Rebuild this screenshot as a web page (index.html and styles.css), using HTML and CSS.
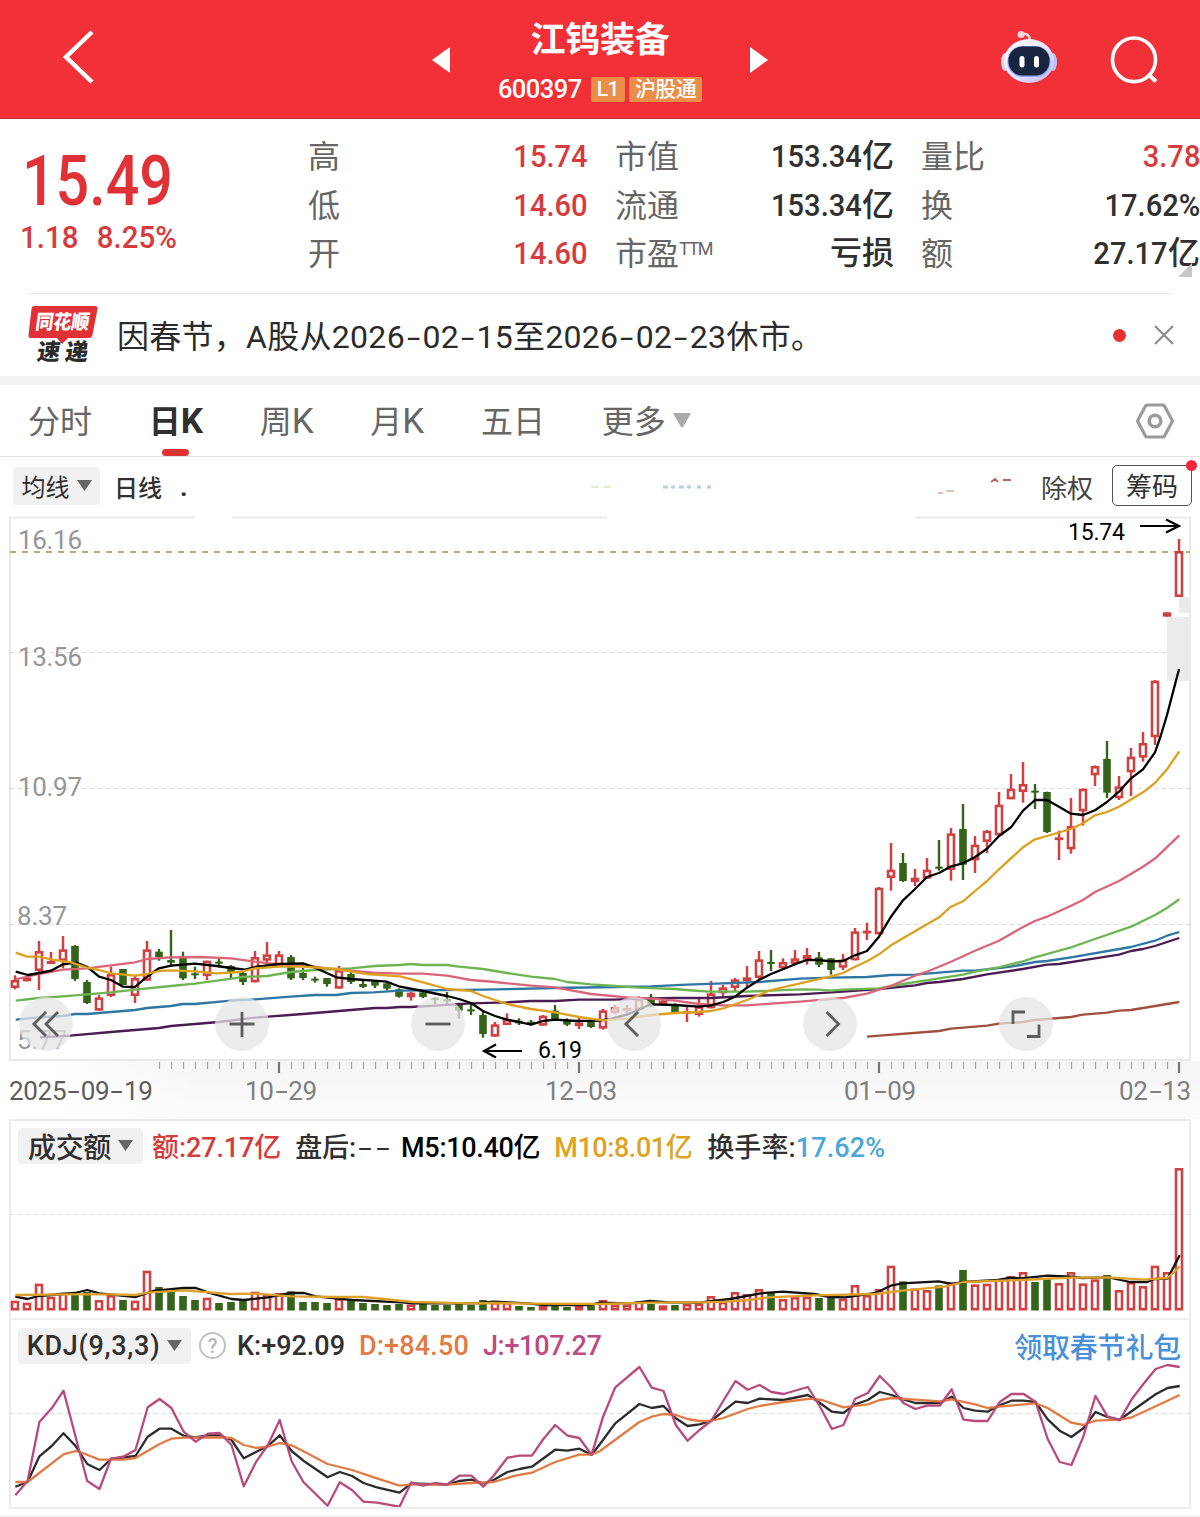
FILE: index.html
```html
<!DOCTYPE html>
<html lang="zh-CN">
<head>
<meta charset="utf-8">
<title>江钨装备 600397</title>
<link rel="stylesheet" href="styles.css">
</head>
<body>
<header class="topbar">
  <svg class="back" width="36" height="56" viewBox="0 0 36 56"><path d="M31 3 5 28l26 25" fill="none" stroke="#fff" stroke-width="4.5"/></svg>
  <svg class="prev" width="18" height="26" viewBox="0 0 18 26"><path d="M18 0v26L0 13z" fill="#fff"/></svg>
  <div class="title">
    <h1>江钨装备</h1>
    <div class="code"><span>600397</span><b class="tag tag-l1">L1</b><b class="tag">沪股通</b></div>
  </div>
  <svg class="next" width="18" height="26" viewBox="0 0 18 26"><path d="M0 0v26l18-13z" fill="#fff"/></svg>
  <svg class="robot" width="58" height="54" viewBox="0 0 58 54">
    <defs><linearGradient id="shell" x1="0" y1="0" x2="1" y2="1"><stop offset="0" stop-color="#fff"/><stop offset=".55" stop-color="#e9e4fb"/><stop offset="1" stop-color="#b9b3f2"/></linearGradient></defs>
    <path d="M22 4q8-1 8 7" fill="none" stroke="#ffd9dd" stroke-width="2.6"/><circle cx="21" cy="4.500" r="3.500" fill="#ffd5d9"/>
    <ellipse cx="5" cy="32" rx="4" ry="9" fill="#d9d4f7"/><ellipse cx="53" cy="32" rx="4" ry="9" fill="#b9c4fa"/>
    <ellipse cx="29" cy="31" rx="25" ry="22" fill="url(#shell)"/>
    <rect x="7.500" y="16" width="43" height="31" rx="15" fill="#8ba0f0"/>
    <rect x="8.500" y="16.500" width="41" height="29" rx="14" fill="#17233f"/>
    <rect x="19.500" y="26" width="5" height="11.500" rx="2.500" fill="#fff"/><rect x="34" y="26" width="5" height="11.500" rx="2.500" fill="#fff"/>
  </svg>
  <svg class="search" width="50" height="50" viewBox="0 0 50 50"><ellipse cx="24" cy="23.800" rx="21.500" ry="21.800" fill="none" stroke="#fff" stroke-width="3.600"/><path d="m38 38 8 7.500" stroke="#fff" stroke-width="4" fill="none"/></svg>
</header>

<section class="quote">
  <div class="price"><strong>15.49</strong><p><span>1.18</span><span>8.25%</span></p></div>
  <dl class="col"><dt>高</dt><dd class="up"><b>15.74</b></dd><dt>低</dt><dd class="up"><b>14.60</b></dd><dt>开</dt><dd class="up"><b>14.60</b></dd></dl>
  <dl class="col"><dt>市值</dt><dd><b>153.34</b>亿</dd><dt>流通</dt><dd><b>153.34</b>亿</dd><dt>市盈<sup>TTM</sup></dt><dd>亏损</dd></dl>
  <dl class="col"><dt>量比</dt><dd class="up"><b>3.78</b></dd><dt>换</dt><dd><b>17.62%</b></dd><dt>额</dt><dd><b>27.17</b>亿</dd></dl>
  <i class="corner"></i>
</section>

<section class="news">
  <svg class="logo" width="70" height="60" viewBox="0 0 70 60">
    <path d="M6 1h61q3 0 2.500 3l-5 26q-.5 3-3.500 3H40l-6 6-5-6H3q-3 0-2.500-3L3.500 4Q4 1 6 1z" fill="#e03236"/>
    <g font-family="Noto Sans CJK SC" font-weight="900" transform="skewX(-8)"><text x="10" y="24" font-size="20" fill="#fff" textLength="54" lengthAdjust="spacingAndGlyphs">同花顺</text><text x="16" y="55" font-size="23" fill="#2b2b2b" textLength="51">速递</text></g>
  </svg>
  <p class="headline">因春节，A股从2026<i>-</i>02<i>-</i>15至2026<i>-</i>02<i>-</i>23休市。</p>
  <i class="dot"></i>
  <svg class="close" width="20" height="20" viewBox="0 0 20 20"><path d="m1 1 18 18M19 1 1 19" stroke="#8c8c8c" stroke-width="2.200"/></svg>
</section>

<nav class="tabs">
  <a>分时</a><a class="active">日<em>K</em></a><a>周<em>K</em></a><a>月<em>K</em></a><a>五日</a><a>更多</a>
  <svg class="more" width="18" height="15" viewBox="0 0 18 15"><path d="M1 0h16q1 0 .6 1L10 14q-1 1-2 0L.4 1Q0 0 1 0z" fill="#aaa"/></svg>
  <svg class="gear" width="38" height="36" viewBox="0 0 38 36"><path d="M11 2h16q1 0 1.500 1L36 17q.5 1 0 2l-7.500 14q-.5 1-1.500 1H11q-1 0-1.500-1L2 19q-.5-1 0-2L9.500 3q.5-1 1.500-1z" fill="none" stroke="#9a9a9a" stroke-width="3.200"/><circle cx="19" cy="18" r="5.800" fill="none" stroke="#9a9a9a" stroke-width="3.600"/></svg>
</nav>

<div class="toolbar">
  <span class="chip chip-ma">均线<svg width="15" height="11" viewBox="0 0 15 11"><path d="M0 0h15L7.500 11z" fill="#666"/></svg></span>
  <b class="period">日线</b><span class="point">.</span>
  <svg class="marks" width="440" height="20" viewBox="0 0 440 20"><path d="M2 10h8m5 0h7" stroke="#cdebc4" stroke-width="1.500"/><path d="M74 10h5m3 0h4m4 0h5m3 0h4m6 0h4m6 0h4" stroke="#b5cfe2" stroke-width="3"/><path d="M349 16h5m3-2h8" stroke="#d8a9a0" stroke-width="1.500"/><path d="m402 5 4-3 3 3m5-2h8" stroke="#b96457" stroke-width="1.800" fill="none"/></svg>
  <span class="rights">除权</span><span class="chips">筹码<i></i></span>
</div>

<main>
  <section class="kline">
    <svg id="kline" width="1200" height="545" viewBox="0 516 1200 545"></svg>
    <div class="controls">
      <button><svg viewBox="0 0 54 54"><path d="M27 15 15 27l12 12M39 15 27 27l12 12"/></svg></button>
      <button><svg viewBox="0 0 54 54"><path d="M27 15v25M14.500 27h25"/></svg></button>
      <button><svg viewBox="0 0 54 54"><path d="M14.500 27h25"/></svg></button>
      <button><svg viewBox="0 0 54 54"><path d="M31 15 19 27l12 12"/></svg></button>
      <button><svg viewBox="0 0 54 54"><path d="m23.500 15 12 12-12 12"/></svg></button>
      <button><svg viewBox="0 0 54 54"><path d="M14 27V15h12M28 39.500h12v-12"/></svg></button>
    </div>
  </section>
  <div class="axis">
    <svg id="ticks" width="1200" height="14" viewBox="0 1060 1200 14"></svg>
    <div class="dates"><span class="first">2025<i>-</i>09<i>-</i>19</span><span>10<i>-</i>29</span><span>12<i>-</i>03</span><span>01<i>-</i>09</span><span>02<i>-</i>13</span></div>
  </div>
  <section class="panel volume">
    <div class="legend">
      <span class="chip">成交额<svg width="15" height="11" viewBox="0 0 15 11"><path d="M0 0h15L7.500 11z" fill="#666"/></svg></span>
      <span class="red">额:27.17亿</span><span class="dark after">盘后:<i>-</i><i>-</i></span><span class="black">M5:10.40亿</span><span class="gold">M10:8.01亿</span><span class="dark turn">换手率:<em>17.62%</em></span>
    </div>
    <svg id="volume" width="1200" height="155" viewBox="0 1163 1200 155"></svg>
  </section>
  <section class="panel kdj">
    <div class="legend">
      <span class="chip"><span>KDJ(9,3,3)</span><svg width="15" height="11" viewBox="0 0 15 11"><path d="M0 0h15L7.500 11z" fill="#666"/></svg></span>
      <span class="help">?</span><span class="dark">K:+92.09</span><span class="orange">D:+84.50</span><span class="plum">J:+107.27</span><a class="gift">领取春节礼包</a>
    </div>
    <svg id="kdj" width="1200" height="145" viewBox="0 1362 1200 145"></svg>
  </section>
</main>
<footer></footer>
<script src="chart.js"></script>
</body>
</html>
```
FILE: styles.css
```css
* { box-sizing: border-box; }
body { margin: 0; width: 1200px; height: 1517px; overflow: hidden; background: #fff; color: #303030; font-family: Roboto, "Noto Sans CJK SC", sans-serif; }
i, em { font-style: normal; }
h1, p, dl, dd { margin: 0; }
svg { display: block; flex: none; }

.topbar { display: flex; align-items: flex-start; height: 119px; background: #f23038; border-bottom: 1px solid #b9353b; color: #fff; }
.back { margin: 29px 0 0 61px; }
.prev { margin: 47px 0 0 335px; }
.title { width: 300px; text-align: center; }
.title h1 { margin-top: 16px; font-size: 35px; font-weight: 700; line-height: 50px; letter-spacing: -.2px; }
.code { display: flex; justify-content: center; align-items: center; margin-top: 10px; height: 26px; font-size: 25.500px; font-weight: 500; letter-spacing: -.5px; }
.code > span { margin-right: 9px; }
.tag { display: inline-block; height: 25px; line-height: 25px; margin-right: 4px; padding: 0 6px; background: #e98d48; border-radius: 2px; font-size: 21px; font-weight: 500; letter-spacing: -.6px; }
.tag:last-child { margin-right: 0; }
.next { margin: 47px 0 0 0; }
.robot { margin: 30px 0 0 232px; }
.search { margin: 36px 0 0 52px; }

.quote { position: relative; display: flex; height: 174px; padding-top: 13px; }
.price { width: 308px; padding-left: 20px; color: #e03236; }
.price strong { display: block; margin: 13px 0 0 2px; font-size: 70px; font-weight: 500; line-height: 72px; transform: scaleX(.845); transform-origin: left; }
.price p { display: flex; gap: 20px; margin-top: 0; font-size: 32px; line-height: 40px; font-weight: 500; transform: scaleX(.92); transform-origin: left; color: #d63c3e; }
.col { display: grid; grid-template-columns: auto 1fr; grid-auto-rows: 48.500px; width: 280px; margin-right: 27px; line-height: 48px; font-size: 32px; }
.col:nth-of-type(2) { width: 279px; }
.col:nth-of-type(3) { width: 279px; margin-right: 0; }
.col dt { color: #666; white-space: nowrap; line-height: 50px; }
.col dd { text-align: right; font-weight: 500; }
.col b { display: inline-block; font-weight: 500; transform: scaleX(.91); transform-origin: right; }
.col .up { color: #d63c3e; }
.col sup { font-size: 18px; line-height: 0; vertical-align: 10px; letter-spacing: -1.500px; }
.corner { position: absolute; right: 8px; bottom: 16px; border-left: 14px solid transparent; border-bottom: 14px solid #c8c8c8; }

.news { display: flex; align-items: center; height: 83px; margin: 0 28px; border-top: 1px solid #e8e8e8; }
.logo { margin-left: 0; }
.headline { flex: 1; margin: 3px 0 0 19px; font-size: 32px; line-height: 48px; white-space: nowrap; color: #2b2b2b; letter-spacing: .28px; }
.headline i { display: inline-block; width: 17.500px; text-align: center; transform: scaleX(1.5); }
.dot { width: 13px; height: 13px; border-radius: 50%; background: #e5302f; margin-right: 28px; }
.close { margin-right: -2px; }

.tabs { display: flex; align-items: center; height: 81px; padding-left: 28px; border-top: 9px solid #f3f3f3; border-bottom: 1px solid #e2e2e2; font-size: 32px; color: #666; }
.tabs a { margin-right: 56.700px; line-height: 70px; padding-top: 3px; white-space: nowrap; }
.tabs em { font-size: 35px; line-height: 0; }
.tabs .active { position: relative; color: #303030; font-weight: 700; }
.tabs .active::after { content: ""; position: absolute; left: 13px; bottom: 1px; width: 27px; height: 7px; border-radius: 4px; background: #e03236; }
.tabs a:nth-child(6) { margin-right: 7px; }
.gear { margin-left: auto; margin-right: 26px; }

.toolbar { display: flex; align-items: center; height: 59px; padding-left: 13px; font-size: 26px; }
.chip { display: flex; align-items: center; justify-content: center; gap: 7px; background: #f1f1f1; border-radius: 4px; color: #303030; font-weight: 500; }
.chip-ma { width: 87px; height: 38px; margin-top: -2px; font-size: 24px; font-weight: 400; }
.period { margin-left: 14px; font-weight: 500; font-size: 24px; }
.point { margin-left: 18px; font-weight: 700; width: 10px; }
.marks { margin-left: 399px; }
.rights { margin-left: 12px; color: #444; white-space: nowrap; }
.chips { position: relative; margin: -2px 0 0 19px; width: 80px; height: 41px; border: 1.500px solid #555; border-radius: 5px; text-align: center; line-height: 43px; }
.chips i { position: absolute; right: -6px; top: -6px; width: 11px; height: 11px; border-radius: 50%; background: #f5273a; }

.kline { position: relative; height: 545px; }
.controls { position: absolute; left: 19px; top: 481px; display: flex; gap: 142px; }
.controls button { width: 54px; height: 54px; padding: 0; border: 0; border-radius: 50%; background: rgba(229, 229, 229, .74); }
.controls path { fill: none; stroke: #5c5c5c; stroke-width: 2.800; }
.axis { height: 58px; background: linear-gradient(90deg, #fff 50px, rgba(255, 255, 255, 0) 200px), linear-gradient(#f5f5f5, #fbfbfb 80%); }
.dates { display: grid; grid-template-columns: 236px 300px 299px 275px auto; padding-left: 9px; font-size: 26px; line-height: 32px; color: #808080; letter-spacing: -.3px; white-space: nowrap; }
.dates i { display: inline-block; width: 14.500px; text-align: center; transform: scaleX(1.700); }
.dates .first { color: #5c5c5c; }

.panel { position: relative; width: 1182px; margin-left: 9px; border: 2px solid #ececec; }
.panel > svg { margin-left: -11px; }
.volume { height: 201px; }
.kdj { height: 189px; border-top: 0; }
.legend { display: flex; align-items: center; height: 42px; padding: 7px 8px 0 7px; font-size: 27px; font-weight: 500; letter-spacing: -.1px; white-space: nowrap; }
.kdj .legend { padding-top: 9px; }
.legend .chip { height: 36px; }
.volume .chip { width: 125px; margin-right: 9px; font-size: 28px; letter-spacing: -.3px; }
.kdj .chip { width: 173px; margin-right: 8px; }
.kdj .chip span { letter-spacing: .7px; }
.legend .red { color: #d63c3e; margin-right: 14px; }
.legend .black { color: #000; margin-right: 14px; letter-spacing: -.3px; }
.legend .gold { color: #dfa220; margin-right: 15px; letter-spacing: -.45px; }
.legend .after { margin-right: 9px; }
.legend i { display: inline-block; width: 18px; text-align: center; transform: scaleX(1.800); font-weight: 400; }
.legend em { color: #4aa7d8; }
.legend .turn { letter-spacing: .1px; }
.help { width: 27px; height: 27px; border: 2px solid #c2c2c2; border-radius: 50%; color: #b5b5b5; font-size: 20px; line-height: 24px; text-align: center; margin-right: 11px; }
.kdj .dark, .kdj .orange { margin-right: 14px; }
.kdj .dark { letter-spacing: 0; }
.legend .orange { color: #e27a43; letter-spacing: .15px; }
.legend .plum { color: #bd4a80; letter-spacing: -.3px; }
.legend .gift { margin-left: auto; color: #4a8fd8; font-size: 28px; letter-spacing: -.2px; }
footer { margin-top: 6px; height: 2px; background: #f3f3f3; }

svg text { font-family: Roboto, "Noto Sans CJK SC", sans-serif; }
.frame { fill: none; stroke: #e9e9e9; stroke-width: 2; }
.grid { stroke: #dcdcdc; stroke-width: 1.200; stroke-dasharray: 4 4; }
.now { stroke: #b7a97c; stroke-width: 1.800; stroke-dasharray: 6 6; }
.label { font-size: 26px; fill: #969696; }
.mark { font-size: 23px; fill: #000; }
.arrow { fill: none; stroke: #000; stroke-width: 2.200; }
.gap { fill: #ebebeb; }
.rise { fill: #fff; stroke: #cf4243; stroke-width: 2.600; }
.rise-wick { stroke: #cf4243; stroke-width: 2.500; }
.fall { fill: #336419; }
.fall-wick { stroke: #336419; stroke-width: 2.400; }
.line { fill: none; stroke-width: 2.300; stroke-linejoin: round; }
.tick { stroke: #a5a5a5; stroke-width: 1.200; }
.tick-major { stroke: #777; stroke-width: 2.200; }
```
FILE: chart.js
```js
const el = (id) => document.getElementById(id);
const X = (i) => 15 + 12 * i;

// [direction, high, body top, body bottom, low] in thirds of a pixel from `base`
const days = [];
const add = (base, rows) => rows.trim().split(/\s+/).forEach((r) => {
  const [d, ...v] = r.split(',');
  days.push([d, ...v.map((n) => base + n / 3)]);
});
add(900, `R,226,240,264,268 R,228,232,244,244 R,123,153,213,270 R,156,183,192,192 R,108,148,183,205 G,135,138,237,243
G,240,246,309,312 R,285,292,332,332 R,200,222,288,291 G,207,207,255,255 R,225,234,288,309 R,123,148,242,242
G,147,155,171,182 G,90,180,188,200 G,155,168,235,240 G,200,220,226,237 R,182,182,228,240 G,177,185,191,202
G,195,198,216,234 G,216,219,246,255 R,153,171,247,247 R,126,163,182,190 R,153,163,201,201 G,165,171,235,240
G,204,219,234,240 G,230,236,240,248 G,234,234,252,260 R,198,210,266,266 G,216,222,246,252 G,240,252,261,264
G,240,245,257,264 G,246,250,266,271 G,265,268,290,293 R,275,278,292,302 G,275,277,291,294 G,292,294,298,312
G,276,298,304,312 G,308,310,332,356 G,312,328,334,345 G,335,345,402,413 R,366,373,410,410 R,340,357,375,375
G,355,362,370,375 G,360,365,373,376 R,345,347,377,377 G,315,332,363,363 G,355,362,374,378 R,350,368,378,387
G,363,366,381,384 R,327,331,386,389 R,315,321,339,342 R,315,324,330,342 R,289,296,330,332 G,282,294,316,322
R,298,302,313,315 G,310,314,336,338 R,320,333,341,366 R,297,319,345,350 R,243,280,325,325 R,255,262,280,290
R,234,238,264,273 R,198,232,243,262 R,153,178,234,237 G,150,186,192,213 R,175,186,205,210 R,150,175,192,195`);
add(740, `R,624,645,659,674 G,636,652,674,681 G,655,655,690,704 R,642,659,683,690 R,564,574,661,661 R,548,572,580,600
R,441,443,583,583 R,309,389,414,452 G,339,369,423,426 R,387,413,426,438 R,354,389,416,416 G,300,380,386,392
R,264,280,390,422 G,192,267,374,420 R,288,314,361,399 R,270,272,306,340 R,156,194,286,286 R,102,146,178,178
R,66,132,156,188 G,132,152,158,207 G,155,156,276,279 R,272,292,300,360 R,174,258,328,341 R,146,146,214,257
R,76,78,106,138 G,3,57,158,174 R,108,139,175,180`);
add(500, `R,744,770,817,888 R,696,729,773,785 R,540,542,712,735 R,337,337,350,350 R,117,153,291,291`);

const volumes = `572 578 521 560 548 555 546 570 555 570 572 482 531 546 558 570 563 579 576 570 545 552 549 544 576 576 579
565 570 579 582 585 582 583 580 585 585 582 585 570 576 576 588 591 588 588 591 588 585 570 584 584 574 582 586 585 582
580 558 575 546 552 537 548 567 561 560 564 564 566 525 555 537 467 514 535 540 526 517 480 523 521 507 498 486 516 504
519 486 520 508 495 540 516 528 467 486 174`.trim().split(/\s+/).map((v) => 1110 + v / 3);

const bar = (i, dir, top, bottom) => {
  const x = X(i), h = bottom - top;
  if (dir === 'G') return `<rect class="fall" x="${x - 3.8}" y="${top}" width="7.6" height="${Math.max(h, 2)}"/>`;
  return `<rect class="rise" x="${x - 3}" y="${top + 1.3}" width="6" height="${Math.max(h - 2.6, 0.2)}"/>`;
};

// Each segment is [origin x, origin y, x scale, "x,y x,y ..."]
const line = (color, ...segs) => {
  const pts = segs.flatMap(([ox, oy, s, p]) => p.split(' ').map((q) => {
    const [x, y] = q.split(',');
    return (ox + x / s).toFixed(1) + ',' + (oy + y / 3).toFixed(1);
  }));
  return `<polyline class="line" stroke="${color}" points="${pts.join(' ')}"/>`;
};
const a = (p) => [0, 900, 3, p], b = (p) => [400, 900, 3, p], c = (p) => [800, 740, 3, p], d = (p) => [980, 500, 3, p];

let k = '<path class="frame" d="M10 1060V517.500H195M232 517.500H607M915 517.500H1190V1060M9 1060H1191"/>';
[652.5, 788.500, 924.500].forEach((y) => { k += `<path class="grid" d="M10 ${y}H1190"/>`; });
k += '<path class="now" d="M10 552H1190"/><rect class="gap" x="1179" y="597" width="12" height="16"/><rect class="gap" x="1167" y="617" width="24" height="64"/>';
[['16.16', 549, 18], ['13.56', 666, 18], ['10.97', 796, 18], ['8.37', 925, 17], ['5.77', 1049, 17]].forEach(([t, y, x]) => {
  k += `<text class="label" x="${x}" y="${y}" textLength="${t.length === 5 ? 64 : 50}">${t}</text>`;
});
days.forEach(([dir, hi, top, bottom, lo], i) => {
  k += `<path class="${dir === 'G' ? 'fall' : 'rise'}-wick" d="M${X(i)} ${hi}V${lo}"/>` + bar(i, dir, top, bottom);
});
k += line('#2f76a3', a('47,359 117,352 189,348 225,342 261,342 405,330 441,324 513,318 549,312 585,312 693,302 765,298 873,290 945,285 1009,285 1053,279 1120,277 1200,272'),
  b('250,269 465,264 645,261 753,259 861,254 970,250 1077,246 1200,236'),
  c('93,713 201,711 273,705 345,704 453,695 489,692 525,692 597,684 633,680 705,666 741,663 813,652 993,621 1065,602 1101,587 1138,576'));
k += line('#4b1c52', a('120,412 210,407 333,396 477,384 513,378 657,366 765,353 909,342 1053,330 1125,324 1161,324 1200,321'),
  b('33,321 105,317 213,310 321,307 393,303 465,303 537,299 645,299 717,296 825,294 933,294 1041,288 1200,283'),
  c('129,755 237,747 345,736 381,729 417,726 489,717 561,703 669,687 741,674 777,672 885,655 957,644 993,633 1029,627 1065,618 1138,594'));
k += line('#a1503f', c('201,890 417,873 453,866 561,857 597,851 669,846 705,840 813,831 849,824 921,818 957,812 993,810 1138,786'));
k += line('#6cb552', a('47,302 117,294 189,289 261,283 333,277 405,269 513,258 585,251 657,241 729,231 801,228 873,216 945,210 1053,205 1125,198 1200,195'),
  b('33,192 69,195 141,195 177,200 249,207 321,219 393,230 465,237 501,246 573,253 645,258 717,263 825,267 897,273 933,275 1041,275 1113,272 1200,268'),
  c('57,749 93,752 129,749 237,745 309,732 417,715 489,704 525,695 597,682 669,664 705,652 813,622 885,597 993,560 1065,525 1101,504 1138,478'));
k += line('#da6579', a('47,238 117,222 189,209 261,205 333,196 405,187 441,177 513,172 600,171 693,175 765,185 837,193 909,195 980,205 1053,212 1120,218 1200,221'),
  b('69,221 141,227 213,240 285,246 393,257 465,262 573,282 681,292 753,296 825,302 897,312 970,316 1041,316 1113,311 1200,305'),
  c('129,774 201,761 273,737 345,707 381,695 453,665 525,632 597,602 669,561 705,543 741,530 813,497 849,480 885,456 957,423 1029,380 1068,353 1138,286'));
k += line('#000', a('47,215 84,225 117,219 153,212 189,193 230,188 261,200 297,230 333,240 369,260 405,261 441,230 477,205 513,197 585,191 650,198 693,204 735,209 765,201 837,192 909,190 945,203 1009,232 1053,237 1161,245 1200,260'),
  b('69,273 141,288 177,297 213,309 249,333 285,348 321,359 357,366 393,374 429,363 465,359 530,363 600,362 635,356 681,344 753,313 825,315 897,320 933,316 970,306 1005,290 1041,263 1077,240 1113,222 1160,203 1200,187'),
  c('21,660 57,660 93,664 129,663 165,646 201,633 237,590 273,530 309,481 345,447 381,411 417,399 453,379 489,370 525,351 561,326 597,288 633,262 669,212 705,180 741,180 777,200 813,221 849,225 885,211 921,186 957,155 993,115 1029,88'),
  d('525,757 543,705 561,645 597,508'));
k += line('#dea01f', a('47,158 81,170 117,170 153,178 213,187 261,203 297,210 333,220 405,227 441,222 477,213 513,211 585,214 650,220 720,216 765,205 837,200 909,200 1009,207 1100,222 1200,229'),
  b('69,247 141,267 213,273 249,288 321,312 393,327 465,337 537,351 609,361 681,356 753,345 825,339 897,336 933,333 970,325 1041,300 1113,270 1200,250'),
  c('93,709 129,699 165,680 201,664 237,643 273,616 345,574 417,532 453,500 489,484 525,453 561,423 597,388 669,322 705,298 741,288 813,267 849,250 885,226 921,216 957,200 1029,157 1065,129 1101,88 1138,34'));
k += '<text class="mark" x="1068" y="540" textLength="57">15.74</text><path class="arrow" d="M1140 526H1179M1166 519.500L1179 526L1166 532.500"/>';
k += '<text class="mark" x="538" y="1058" textLength="44">6.19</text><path class="arrow" d="M522 1051H484M496 1044.500L484 1051L496 1057.500"/>';
el('kline').innerHTML = k;

let t = '';
for (let i = 12; i <= 97; i += 1) {
  const major = [22, 47, 72, 97].includes(i);
  t += `<path class="tick${major ? '-major' : ''}" d="M${X(i) + (major ? 0 : 0.5)} 1061V${major ? 1072 : 1068}"/>`;
}
el('ticks').innerHTML = t;

const s = 1568 / 600;
const e = (p) => [0, 1110, s, p], f = (p) => [600, 1110, s, p], g = (p) => [0, 1320, s, p], h = (p) => [600, 1320, s, p];

let v = '<path class="grid" d="M10 1214.500H1190"/>';
volumes.forEach((top, i) => { v += bar(i, days[i][0], top, 1310.5); });
v += line('#111', e('40,560 72,567 100,558 196,549 228,540 260,550 355,561 400,543 480,534 512,534 545,548 605,567 637,570 700,562 760,549 795,549 825,559 920,570 1050,577 1080,580 1240,580 1290,575 1380,580 1420,585 1540,585'),
  f('0,578 80,580 130,573 180,577 260,578 300,572 340,567 420,550 478,545 560,552 600,561 640,562 720,549 760,527 790,520 885,514 920,522 950,516 1040,510 1070,504 1100,505 1170,497 1230,500 1260,504 1330,502 1385,516 1430,516 1450,507 1483,506 1515,436'));
v += line('#dda02c', e('40,555 180,553 280,553 355,555 385,548 480,541 600,552 670,551 760,559 880,561 950,561 1080,576 1230,580 1290,579 1400,581 1568,582'),
  f('130,578 270,577 330,575 390,570 440,562 560,556 720,552 790,542 900,530 950,516 1100,510 1230,503 1330,502 1420,509 1483,504 1515,470'));
el('volume').innerHTML = v;

let j = '<path class="grid" d="M10 1413.500H1190"/>';
j += line('#2c2c2c', g('40,500 72,486 103,409 135,378 166,340 198,379 228,432 260,450 290,417 354,408 386,350 417,326 448,326 480,347 511,352 543,346 574,346 605,360 637,415 670,395 700,378 731,346 762,393 793,422 856,472 888,456 920,468 950,489 985,502 1044,518 1075,490 1168,494 1200,483 1232,479 1263,490 1290,480 1326,456 1358,447 1390,440 1451,389 1483,392 1514,386 1546,404'),
  h('0,372 40,310 103,252 135,264 166,258 198,295 229,318 260,313 290,303 354,245 386,249 417,236 480,240 543,225 574,248 606,275 636,279 667,253 700,240 731,216 762,225 793,238 824,249 888,249 919,230 950,264 980,272 1013,275 1044,256 1075,242 1107,242 1138,246 1170,298 1201,332 1232,351 1263,325 1295,276 1326,291 1358,299 1452,223 1483,204 1515,198'));
j += line('#e27a43', g('40,486 72,486 166,403 198,393 228,404 260,419 322,419 354,414 417,372 448,356 480,353 574,352 605,354 637,375 670,384 700,380 731,369 762,376 793,394 856,432 920,450 985,475 1044,497 1075,493 1168,494 1232,489 1290,486 1350,466 1390,458 1451,426 1514,404 1546,404'),
  h('0,393 103,306 135,290 166,282 198,285 229,297 260,303 290,303 322,294 386,267 417,258 480,246 550,236 580,240 636,262 700,253 731,240 762,234 824,239 888,244 919,238 980,253 1013,264 1044,260 1138,250 1170,264 1232,308 1263,315 1295,302 1358,299 1390,292 1420,276 1515,225'));
j += line('#b84a7c', g('40,526 72,483 103,306 135,265 166,212 228,483 260,507 290,416 322,410 354,390 386,262 417,237 448,264 480,335 511,365 543,341 574,339 605,375 637,499 670,424 700,375 731,300 762,424 793,486 856,557 888,487 920,510 950,545 985,548 1044,560 1075,487 1105,497 1137,489 1168,494 1200,467 1232,467 1263,500 1290,467 1326,413 1358,407 1390,407 1420,357 1451,315 1483,347 1514,354 1546,404'),
  h('8,290 40,202 103,141 135,203 166,213 198,315 229,362 260,330 290,303 322,243 354,183 386,209 417,195 448,216 480,222 543,201 574,258 606,327 636,315 667,236 700,219 731,168 762,203 793,249 824,267 856,256 888,257 919,208 950,299 980,303 1013,303 1044,247 1075,222 1107,222 1138,245 1170,357 1201,426 1232,435 1263,350 1295,228 1326,289 1358,301 1390,237 1420,192 1452,147 1483,135 1515,141'));
el('kdj').innerHTML = j;
```
